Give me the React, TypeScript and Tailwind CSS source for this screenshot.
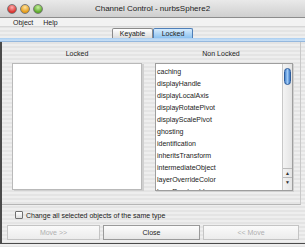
import React from "react";

const items = [
  "caching",
  "displayHandle",
  "displayLocalAxis",
  "displayRotatePivot",
  "displayScalePivot",
  "ghosting",
  "identification",
  "inheritsTransform",
  "intermediateObject",
  "layerOverrideColor",
  "layerRenderable",
];

function Light({ color }: { color: string }) {
  return (
    <div
      className="w-[10px] h-[10px] rounded-full border border-[#7a7a7a]"
      style={{ background: color }}
    />
  );
}

export default function App() {
  return (
    <div className="w-[305px] h-[247px] overflow-hidden flex flex-col font-['Liberation_Sans',Arial,sans-serif] text-[7px] leading-none text-[#222] bg-[repeating-linear-gradient(to_bottom,#eeeeee_0px,#eeeeee_2px,#e4e4e4_2px,#e4e4e4_4px)]">
      {/* title bar */}
      <div className="relative h-[18px] flex items-center border-b border-[#8c8c8c] bg-[linear-gradient(to_bottom,#e9e9e9,#cfcfcf)]">
        <div className="flex gap-[3px] pl-[7px]">
          <Light color="radial-gradient(circle at 50% 30%,#ffb0b0,#d9302c 70%)" />
          <Light color="radial-gradient(circle at 50% 30%,#ffe3a0,#e39a17 70%)" />
          <Light color="radial-gradient(circle at 50% 30%,#c8f0a0,#5aa82a 70%)" />
        </div>
        <div className="absolute inset-0 flex items-center justify-center text-[8px] text-[#222]">
          Channel Control - nurbsSphere2
        </div>
      </div>

      {/* menu bar */}
      <div className="h-[9px] flex items-center gap-[10px] pl-[13px] bg-[#f2f2f2] border-b border-[#d6d6d6]">
        <span>Object</span>
        <span>Help</span>
      </div>

      {/* tabs */}
      <div className="h-[11px] flex items-end pl-[112px]">
        <div className="w-[41px] h-[10px] flex items-center justify-center border border-b-0 border-[#8a8a8a] rounded-t-[2px] bg-[linear-gradient(to_bottom,#ffffff,#dcdcdc)]">
          Keyable
        </div>
        <div className="w-[40px] h-[10px] flex items-center justify-center border border-b-0 border-[#4f7fb8] rounded-t-[2px] bg-[linear-gradient(to_bottom,#d6ebfd,#8cc2f0)]">
          Locked
        </div>
      </div>
      <div className="h-[4px] bg-[linear-gradient(to_bottom,#a9cdf0,#c8e0f7_60%,#7ea6d2)]" />

      {/* body */}
      <div className="flex-1 flex flex-col border-l-[2px] border-b border-[#4a4a4a] mb-[3px]">
        <div className="h-[163px] flex flex-col border-b border-[#b5b5b5] mr-[4px] border-r border-r-[#c8c8c8]">
          <div className="flex h-[21px] items-end pb-[6px]">
            <div className="w-[140px] text-center pl-[10px]">Locked</div>
            <div className="w-[146px] text-center pl-[12px]">Non Locked</div>
          </div>
          <div className="flex pl-[10px] gap-[13px]">
            <div className="w-[130px] h-[127px] bg-white border border-[#b9b9b9] shadow-[2px_1px_0_#d0d0d0]" />
            <div className="w-[138px] h-[128px] bg-white border border-[#9e9e9e] shadow-[1px_1px_0_#d0d0d0] flex overflow-hidden">
              <div className="flex-1 pt-[1px] pl-[1px]">
                {items.map((t) => (
                  <div key={t} className="h-[12px] flex items-center">
                    {t}
                  </div>
                ))}
              </div>
              <div className="w-[10px] border-l border-[#c8c8c8] bg-[repeating-linear-gradient(to_right,#f4f4f4_0px,#e2e2e2_10px)] flex flex-col items-center pt-[4px]">
                <div className="w-[7px] h-[17px] rounded-full border border-[#2d5d9c] bg-[linear-gradient(to_right,#4a86d0,#9fcaf5_50%,#3b77c4)]" />
                <div className="flex-1" />
                <div className="w-full h-[9px] border-t border-[#bbb] flex items-center justify-center text-[5px] text-[#333]">
                  ▲
                </div>
                <div className="w-full h-[9px] border-t border-[#bbb] flex items-center justify-center text-[5px] text-[#333] mb-[4px]">
                  ▼
                </div>
              </div>
            </div>
          </div>
        </div>

        {/* checkbox */}
        <div className="h-[18px] flex items-center pl-[13px] gap-[3px] pt-[2px]">
          <div className="w-[8px] h-[8px] border border-[#6f6f6f] rounded-[1px] bg-[linear-gradient(to_bottom,#ffffff,#dedede)]" />
          <span>Change all selected objects of the same type</span>
        </div>

        {/* buttons */}
        <div className="flex gap-[3px] pl-[5px] pt-[2px]">
          <div className="w-[93px] h-[15px] flex items-center justify-center border border-[#c4c4c4] bg-[linear-gradient(to_bottom,#fafafa,#ececec)] text-[#b0b0b0]">
            Move &gt;&gt;
          </div>
          <div className="w-[97px] h-[15px] flex items-center justify-center border border-[#9a9a9a] bg-[linear-gradient(to_bottom,#fdfdfd,#e6e6e6)]">
            Close
          </div>
          <div className="w-[96px] h-[15px] flex items-center justify-center border border-[#c4c4c4] bg-[linear-gradient(to_bottom,#fafafa,#ececec)] text-[#b0b0b0]">
            &lt;&lt; Move
          </div>
        </div>
      </div>
    </div>
  );
}
